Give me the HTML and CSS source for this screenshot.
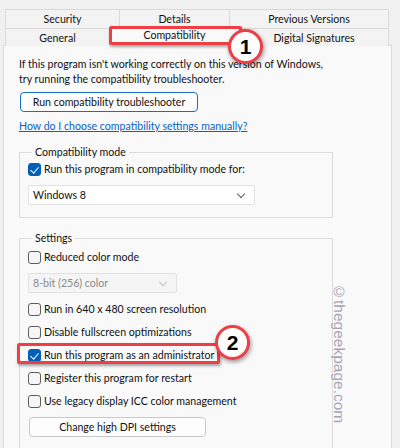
FILE: index.html
```html
<!DOCTYPE html>
<html lang="en">
<head>
	<meta charset="UTF-8">
	<meta name="viewport" content="width=device-width, initial-scale=1.0">
	<link rel="stylesheet" href="styles.css">
	<title>Properties - Compatibility</title>
</head>
<body>
	<div class="window">
		<div class="tabs">
			<div class="tab-row top">
				<div class="tab">Security</div>
				<div class="tab">Details</div>
				<div class="tab">Previous Versions</div>
			</div>
			<div class="tab-row bottom">
				<div class="tab">General</div>
				<div class="tab active">Compatibility</div>
				<div class="tab">Digital Signatures</div>
			</div>
		</div>

		<div class="panel">
			<p class="intro">If this program isn't working correctly on this version of Windows,<br>try running the compatibility troubleshooter.</p>
			<button class="btn btn-primary">Run compatibility troubleshooter</button>
			<a class="help-link" href="#">How do I choose compatibility settings manually?</a>

			<fieldset class="group group-mode">
				<legend>Compatibility mode</legend>
				<label class="check"><span class="box checked"></span>Run this program in compatibility mode for:</label>
				<div class="select select-os">Windows 8<span class="chev"></span></div>
			</fieldset>

			<fieldset class="group group-settings">
				<legend>Settings</legend>
				<label class="check"><span class="box"></span>Reduced color mode</label>
				<div class="select select-color disabled">8-bit (256) color<span class="chev"></span></div>
				<label class="check"><span class="box"></span>Run in 640 x 480 screen resolution</label>
				<label class="check"><span class="box"></span>Disable fullscreen optimizations</label>
				<label class="check"><span class="box checked"></span>Run this program as an administrator</label>
				<label class="check"><span class="box"></span>Register this program for restart</label>
				<label class="check"><span class="box"></span>Use legacy display ICC color management</label>
				<button class="btn btn-dpi">Change high DPI settings</button>
			</fieldset>
		</div>

		<!-- annotations -->
		<div class="mark mark-tab"></div>
		<div class="step step-1">1</div>
		<div class="mark mark-admin"></div>
		<div class="step step-2">2</div>
		<div class="watermark">©thegeekpage.com</div>
	</div>
</body>
</html>
```

FILE: styles.css
```css
* {
  box-sizing: border-box;
  margin: 0;
  padding: 0;
  font: inherit;
}
html, body {
  height: 100%;
}
body {
  overflow: hidden;
  background: #f0f0f0;
  color: #111;
  font: 400 10.6px/15px Lato, "Noto Sans", sans-serif;
}
.window {
  position: relative;
  height: 100%;
  padding: 9px 0 0 3px;
}

/* tabs */
.tab-row {
  display: grid;
  margin-left: 2px;
  width: 384px;
  white-space: nowrap;
}
.tab-row.top {
  grid-template-columns: 115px 110px 1fr;
  height: 19px;
}
.tab-row.bottom {
  grid-template-columns: 105px 130px 1fr;
  height: 17px;
}
.tab {
  display: flex;
  align-items: center;
  justify-content: center;
  border: 1px solid #dadada;
  border-left: none;
  border-bottom: none;
  background: #f3f3f3;
}
.tab:first-child {
  border-left: 1px solid #dadada;
}
.tab-row.bottom .tab {
  padding-top: 2px;
}
.tab-row.bottom .tab.active {
  align-items: flex-start;
  padding-top: 1px;
  background: #f9f9f9;
  line-height: 11px;
}

/* panel */
.panel {
  width: 389px;
  height: 420px;
  padding: 11px 0 0 15px;
  border: 1px solid #dcdcdc;
  border-bottom: none;
  background: #f9f9f9;
  white-space: nowrap;
}
.btn {
  display: block;
  height: 20px;
  border: 1px solid #c9c9c9;
  border-radius: 4px;
  background: #fdfdfd;
  color: #111;
  text-align: center;
}
.btn-primary {
  margin: 5px 0 0 1px;
  width: 178px;
  border-color: #1a6ec0;
}
.help-link {
  display: block;
  margin-top: 7px;
  color: #0a5fc8;
  text-decoration: underline;
}

.group {
  width: 314px;
  border: 1px solid #dcdcdc;
  padding: 2px 0 12px 8px;
}
.group legend {
  margin-left: 4px;
  padding: 0 3px;
}
.group-mode {
  margin-top: 11px;
}
.group-settings {
  margin-top: 13px;
  height: 220px;
  padding-top: 4px;
}

.check {
  display: flex;
  align-items: center;
  gap: 3px;
  height: 15px;
}
.group-settings .check + .check {
  margin-top: 8px;
}
.box {
  flex: none;
  width: 13px;
  height: 13px;
  border: 1px solid #5d5d5d;
  border-radius: 3px;
  background: #f6f6f6;
}
.box.checked {
  position: relative;
  border-color: #005fb8;
  background: #005fb8;
}
.box.checked::after {
  position: absolute;
  left: 3px;
  top: 1px;
  width: 4px;
  height: 7px;
  border: solid #fff;
  border-width: 0 1px 1px 0;
  transform: rotate(40deg);
  content: '';
}

.select {
  position: relative;
  display: flex;
  align-items: center;
  height: 20px;
  margin-top: 8px;
  padding-left: 4px;
  border: 1px solid #e2e2e2;
  border-radius: 2px;
  background: #fff;
}
.select-os {
  width: 227px;
}
.select-color {
  width: 149px;
  margin: 8px 0 9px;
}
.select.disabled {
  background: #f5f5f5;
  color: #8a8a8a;
}
.chev {
  position: absolute;
  right: 10px;
  top: 5px;
  width: 6px;
  height: 6px;
  border: solid #5f5f5f;
  border-width: 0 1px 1px 0;
  transform: rotate(45deg);
}
.select.disabled .chev {
  border-color: #c2c2c2;
}
.btn-dpi {
  margin: 8px 0 0 1px;
  width: 177px;
}

/* annotations */
.mark {
  position: absolute;
  border: 3px solid #ee3f46;
  border-radius: 2px;
  box-shadow: 1px 2px 3px rgba(0, 0, 0, 0.35);
}
.mark-tab {
  left: 109px;
  top: 26px;
  width: 133px;
  height: 19px;
}
.mark-admin {
  left: 17px;
  top: 343px;
  width: 203px;
  height: 21px;
}
.step {
  position: absolute;
  display: grid;
  place-items: center;
  width: 35px;
  height: 35px;
  border: 3px solid #ee3f46;
  border-radius: 50%;
  background: #fff;
  box-shadow: 1px 2px 4px rgba(0, 0, 0, 0.4);
  color: #000;
  font: 700 21px/1 "Liberation Sans", Arial, sans-serif;
}
.step-1 {
  left: 228px;
  top: 29px;
}
.step-2 {
  left: 215px;
  top: 325px;
}
.watermark {
  position: absolute;
  left: 331px;
  top: 283px;
  writing-mode: vertical-rl;
  color: #aaa3b6;
  font: 400 15.5px/1 "Liberation Sans", Arial, sans-serif;
}
```
